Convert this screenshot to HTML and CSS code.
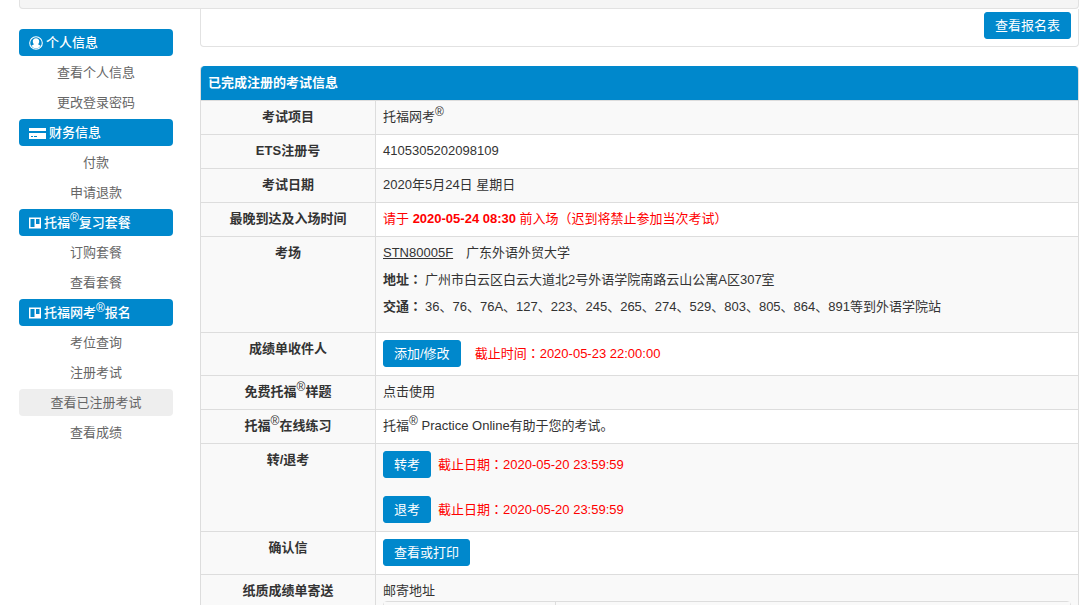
FILE: index.html
```html
<!DOCTYPE html>
<html lang="zh-CN">
<head>
<meta charset="utf-8">
<meta name="viewport" content="width=device-width, initial-scale=1">
<title>查看已注册考试</title>
<link rel="stylesheet" href="styles.css">
</head>
<body>
<div class="page">
  <div class="topbar"></div>
  <div class="columns">
    <nav class="sidebar">
      <h2 class="group"><svg width="14" height="14" viewBox="0 0 14 14" aria-hidden="true"><circle cx="7" cy="7" r="6.3" fill="none" stroke="#fff" stroke-width="1.1"/><path d="M7 2.200c2.100 0 3.200 1.300 3.200 3.100 0 1.300-.5 2.300-1.200 3l2.600 1.500A5.400 5.400 0 0 1 7 12.400 5.400 5.400 0 0 1 2.400 9.800L5 8.300c-.7-.7-1.200-1.700-1.200-3C3.800 3.500 4.900 2.200 7 2.200z" fill="#fff"/></svg>个人信息</h2>
      <a class="item" href="#">查看个人信息</a>
      <a class="item" href="#">更改登录密码</a>
      <h2 class="group"><svg width="17" height="12" viewBox="0 0 17 12" aria-hidden="true"><path d="M0 1h17v3H0zM0 6h17v6H0z" fill="#fff"/><path d="M2 9.500h2M5 9.500h3" stroke="#08c"/></svg>财务信息</h2>
      <a class="item" href="#">付款</a>
      <a class="item" href="#">申请退款</a>
      <h2 class="group"><svg width="12" height="12" viewBox="0 0 12 12" aria-hidden="true"><path fill-rule="evenodd" d="M0 0.500h12v11H0zM1.500 2v8h4V2zM7 2v5h3.500V2z" fill="#fff"/></svg><span>托福<sup>®</sup>复习套餐</span></h2>
      <a class="item" href="#">订购套餐</a>
      <a class="item" href="#">查看套餐</a>
      <h2 class="group"><svg width="12" height="12" viewBox="0 0 12 12" aria-hidden="true"><path fill-rule="evenodd" d="M0 0.500h12v11H0zM1.500 2v8h4V2zM7 2v5h3.500V2z" fill="#fff"/></svg><span>托福网考<sup>®</sup>报名</span></h2>
      <a class="item" href="#">考位查询</a>
      <a class="item" href="#">注册考试</a>
      <a class="item active" href="#" aria-current="page">查看已注册考试</a>
      <a class="item" href="#">查看成绩</a>
    </nav>
    <main class="content">
      <div class="panel"><button class="btn" type="button">查看报名表</button></div>
      <table class="info">
        <thead><tr><th colspan="2">已完成注册的考试信息</th></tr></thead>
        <tbody>
          <tr><th scope="row">考试项目</th><td>托福网考<sup>®</sup></td></tr>
          <tr><th scope="row">ETS注册号</th><td>4105305202098109</td></tr>
          <tr><th scope="row">考试日期</th><td>2020年5月24日 星期日</td></tr>
          <tr><th scope="row">最晚到达及入场时间</th><td class="alert">请于 <b>2020-05-24 08:30</b> 前入场（迟到将禁止参加当次考试）</td></tr>
          <tr><th scope="row">考场</th><td class="venue">
            <p><a href="#">STN80005F</a>&emsp;广东外语外贸大学</p>
            <p><b>地址<span class="colon" lang="zh-TW">：</span></b>广州市白云区白云大道北2号外语学院南路云山公寓A区307室</p>
            <p><b>交通<span class="colon" lang="zh-TW">：</span></b>36、76、76A、127、223、245、265、274、529、803、805、864、891等到外语学院站</p>
          </td></tr>
          <tr><th scope="row">成绩单收件人</th><td><div class="actions wide"><button class="btn" type="button">添加/修改</button><span class="alert">截止时间<span class="colon" lang="zh-TW">：</span>2020-05-23 22:00:00</span></div></td></tr>
          <tr><th scope="row">免费托福<sup>®</sup>样题</th><td>点击使用</td></tr>
          <tr><th scope="row">托福<sup>®</sup>在线练习</th><td>托福<sup>®</sup> Practice Online有助于您的考试。</td></tr>
          <tr><th scope="row">转/退考</th><td><div class="stack">
            <div class="actions"><button class="btn" type="button">转考</button><span class="alert">截止日期<span class="colon" lang="zh-TW">：</span>2020-05-20 23:59:59</span></div>
            <div class="actions"><button class="btn" type="button">退考</button><span class="alert">截止日期<span class="colon" lang="zh-TW">：</span>2020-05-20 23:59:59</span></div>
          </div></td></tr>
          <tr><th scope="row">确认信</th><td><div class="actions"><button class="btn" type="button">查看或打印</button></div></td></tr>
          <tr><th scope="row">纸质成绩单寄送</th><td>邮寄地址
            <table class="address"><tbody><tr><td></td><td></td></tr></tbody></table>
          </td></tr>
        </tbody>
      </table>
    </main>
  </div>
</div>
</body>
</html>
```
FILE: styles.css
```css
* { box-sizing: border-box; }

body {
  margin: 0;
  background: #fff;
  color: #333;
  font: 13px/20px "Liberation Sans", Arial, "Noto Sans CJK SC", sans-serif;
}

.page {
  height: 100vh;
  overflow: hidden;
  padding: 0 1px 0 19px;
}

.topbar {
  height: 9px;
  background: #f5f5f5;
  border: 1px solid #e2e2e2;
  border-top: 0;
  border-radius: 0 0 4px 4px;
}

.columns { display: flex; gap: 27px; }

.sidebar {
  flex: 0 0 154px;
  display: flex;
  flex-direction: column;
  gap: 3px;
  padding-top: 20px;
}

.group, .item {
  height: 27px;
  line-height: 27px;
  border-radius: 4px;
}

.group {
  display: flex;
  align-items: center;
  gap: 3px;
  margin: 0;
  padding: 0 10px;
  background: #08c;
  color: #fff;
  font-size: 13px;
  font-weight: 500;
}

.item { color: #666; text-align: center; text-decoration: none; }
.item.active { background: #eee; }

sup {
  position: relative;
  top: -5px;
  font-size: 12px;
  font-weight: 400;
  line-height: 0;
  vertical-align: baseline;
}

.content { flex: 1; min-width: 0; }

.panel {
  display: flex;
  justify-content: flex-end;
  margin-bottom: 19px;
  padding: 3px 7px 7px;
  border: 1px solid #e2e2e2;
  border-top: 0;
  border-radius: 0 0 4px 4px;
}

.btn {
  height: 27px;
  padding: 0 10px;
  border: 1px solid #08c;
  border-radius: 3px;
  background: #08c;
  color: #fff;
  font: inherit;
}

.info {
  width: 100%;
  border: 1px solid #ddd;
  border-top: 0;
  border-radius: 4px 4px 0 0;
  border-spacing: 0;
}

.info th, .info td {
  padding: 6px 7px 7px;
  border-top: 1px solid #ddd;
  text-align: left;
  vertical-align: top;
}

.info thead th {
  border-color: #08c;
  border-radius: 4px 4px 0 0;
  background: #08c;
  color: #fff;
}

.info tbody th {
  width: 175px;
  border-right: 1px solid #ddd;
  background: #f9f9f9;
  text-align: center;
}

.info tbody tr:nth-child(odd) > td { background: #f9f9f9; }

.info .alert { color: #f00; }

.colon {
  font-family: "Noto Sans CJK TC", sans-serif;
  line-height: 1;
}

.info .venue { padding-bottom: 8px; }
.venue p { margin: 0 0 7px; }
.venue a { color: inherit; }
.venue b { margin-right: 3px; }

.actions { display: flex; align-items: center; gap: 7px; padding: 1px 0; }
.actions.wide { gap: 14px; }
.stack { display: grid; gap: 16px; }

.info .address {
  width: 100%;
  border: 1px solid #ddd;
  border-radius: 4px;
  border-spacing: 0;
}

.info .address td { height: 34px; border-top: 0; background: none; }
.info .address td:first-child { width: 172px; border-right: 1px solid #ddd; }
```
